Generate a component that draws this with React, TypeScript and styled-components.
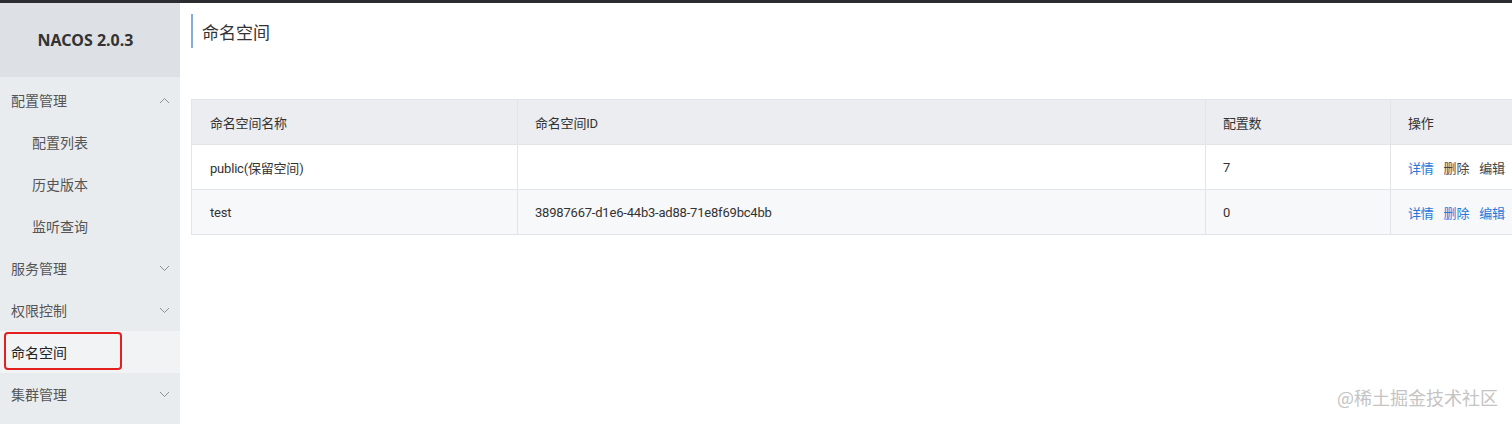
import React from "react";
import styled, { createGlobalStyle } from "styled-components";

const Global = createGlobalStyle`
  html, body { margin: 0; padding: 0; background: #fff; }
  body { font-family: Roboto, "Noto Sans CJK SC", sans-serif; color: #333; }
  * { box-sizing: border-box; }
`;

const Page = styled.div`
  position: relative;
  width: 1512px;
  height: 424px;
  overflow: hidden;
  border-top: 3px solid #2b2d30;
  display: flex;
`;

const Sidebar = styled.aside`
  width: 180px;
  flex: none;
  background: #e9ecef;
  display: flex;
  flex-direction: column;
`;

const Logo = styled.div`
  height: 74px;
  background: #dde1e5;
  display: flex;
  align-items: center;
  justify-content: center;
  font-family: "Noto Sans", sans-serif;
  font-weight: 700;
  font-size: 16px;
  color: #333;
  padding-right: 9px;
`;

const Menu = styled.nav`
  display: flex;
  flex-direction: column;
  padding-top: 2px;
`;

const MenuItem = styled.div<{ $sub?: boolean; $active?: boolean }>`
  height: 42px;
  display: flex;
  align-items: center;
  justify-content: space-between;
  padding: 0 10px 0 ${(p) => (p.$sub ? 32 : 11)}px;
  font-size: 14px;
  color: ${(p) => (p.$active ? "#222" : "#555")};
  background: ${(p) => (p.$active ? "#f1f3f5" : "transparent")};
`;

const Main = styled.main`
  flex: 1;
  min-width: 0;
  padding: 11px 0 0 11px;
  display: flex;
  flex-direction: column;
`;

const Title = styled.h1`
  margin: 0;
  height: 34px;
  border-left: 2px solid #84aed8;
  padding-left: 9px;
  display: flex;
  align-items: center;
  font-size: 17px;
  font-weight: 400;
  color: #333;
`;

const Table = styled.div`
  margin-top: 51px;
  width: 1340px;
  border: 1px solid #e2e4e8;
  border-right: none;
`;

const Row = styled.div<{ $head?: boolean; $alt?: boolean }>`
  display: grid;
  grid-template-columns: 325px 688px 185px 1fr;
  height: ${(p) => (p.$head ? 44 : 45)}px;
  background: ${(p) => (p.$head ? "#ebedf0" : p.$alt ? "#f7f8fa" : "#fff")};
  & + & { border-top: 1px solid #e2e4e8; }
`;

const Cell = styled.div`
  display: flex;
  align-items: center;
  padding-left: 17px;
  font-size: 13px;
  letter-spacing: -0.2px;
  color: #333;
  &:first-child { padding-left: 18px; }
  & + & { border-left: 1px solid #e2e4e8; }
`;

const Actions = styled.div`
  display: flex;
  gap: 10px;
`;

const Link = styled.span<{ $muted?: boolean }>`
  color: ${(p) => (p.$muted ? "#444" : "#2677d9")};
  font-size: 13px;
`;

const Highlight = styled.div`
  position: absolute;
  left: 4px;
  top: 329px;
  width: 118px;
  height: 38px;
  border: 2.5px solid #e41f1f;
  border-radius: 4px;
`;

const Watermark = styled.div`
  position: absolute;
  right: 14px;
  bottom: 14px;
  font-size: 18px;
  color: #c4c4c4;
  font-family: "Noto Sans CJK SC", sans-serif;
`;

const Chevron = ({ up }: { up?: boolean }) => (
  <svg width="11" height="7" viewBox="0 0 11 7" fill="none">
    <polyline
      points={up ? "1,6 5.5,1.5 10,6" : "1,1 5.5,5.5 10,1"}
      stroke="#8a8f96"
      strokeWidth="1"
    />
  </svg>
);

const menu: { label: string; sub?: boolean; arrow?: "up" | "down"; active?: boolean }[] = [
  { label: "配置管理", arrow: "up" },
  { label: "配置列表", sub: true },
  { label: "历史版本", sub: true },
  { label: "监听查询", sub: true },
  { label: "服务管理", arrow: "down" },
  { label: "权限控制", arrow: "down" },
  { label: "命名空间", active: true },
  { label: "集群管理", arrow: "down" },
];

export default function App() {
  return (
    <>
      <Global />
      <Page>
        <Sidebar>
          <Logo>NACOS 2.0.3</Logo>
          <Menu>
            {menu.map((m) => (
              <MenuItem key={m.label} $sub={m.sub} $active={m.active}>
                <span>{m.label}</span>
                {m.arrow && <Chevron up={m.arrow === "up"} />}
              </MenuItem>
            ))}
          </Menu>
        </Sidebar>
        <Main>
          <Title>命名空间</Title>
          <Table>
            <Row $head>
              <Cell>命名空间名称</Cell>
              <Cell>命名空间ID</Cell>
              <Cell>配置数</Cell>
              <Cell>操作</Cell>
            </Row>
            <Row>
              <Cell>public(保留空间)</Cell>
              <Cell></Cell>
              <Cell>7</Cell>
              <Cell>
                <Actions>
                  <Link>详情</Link>
                  <Link $muted>删除</Link>
                  <Link $muted>编辑</Link>
                </Actions>
              </Cell>
            </Row>
            <Row $alt>
              <Cell>test</Cell>
              <Cell>38987667-d1e6-44b3-ad88-71e8f69bc4bb</Cell>
              <Cell>0</Cell>
              <Cell>
                <Actions>
                  <Link>详情</Link>
                  <Link>删除</Link>
                  <Link>编辑</Link>
                </Actions>
              </Cell>
            </Row>
          </Table>
        </Main>
        <Highlight />
        <Watermark>@稀土掘金技术社区</Watermark>
      </Page>
    </>
  );
}
